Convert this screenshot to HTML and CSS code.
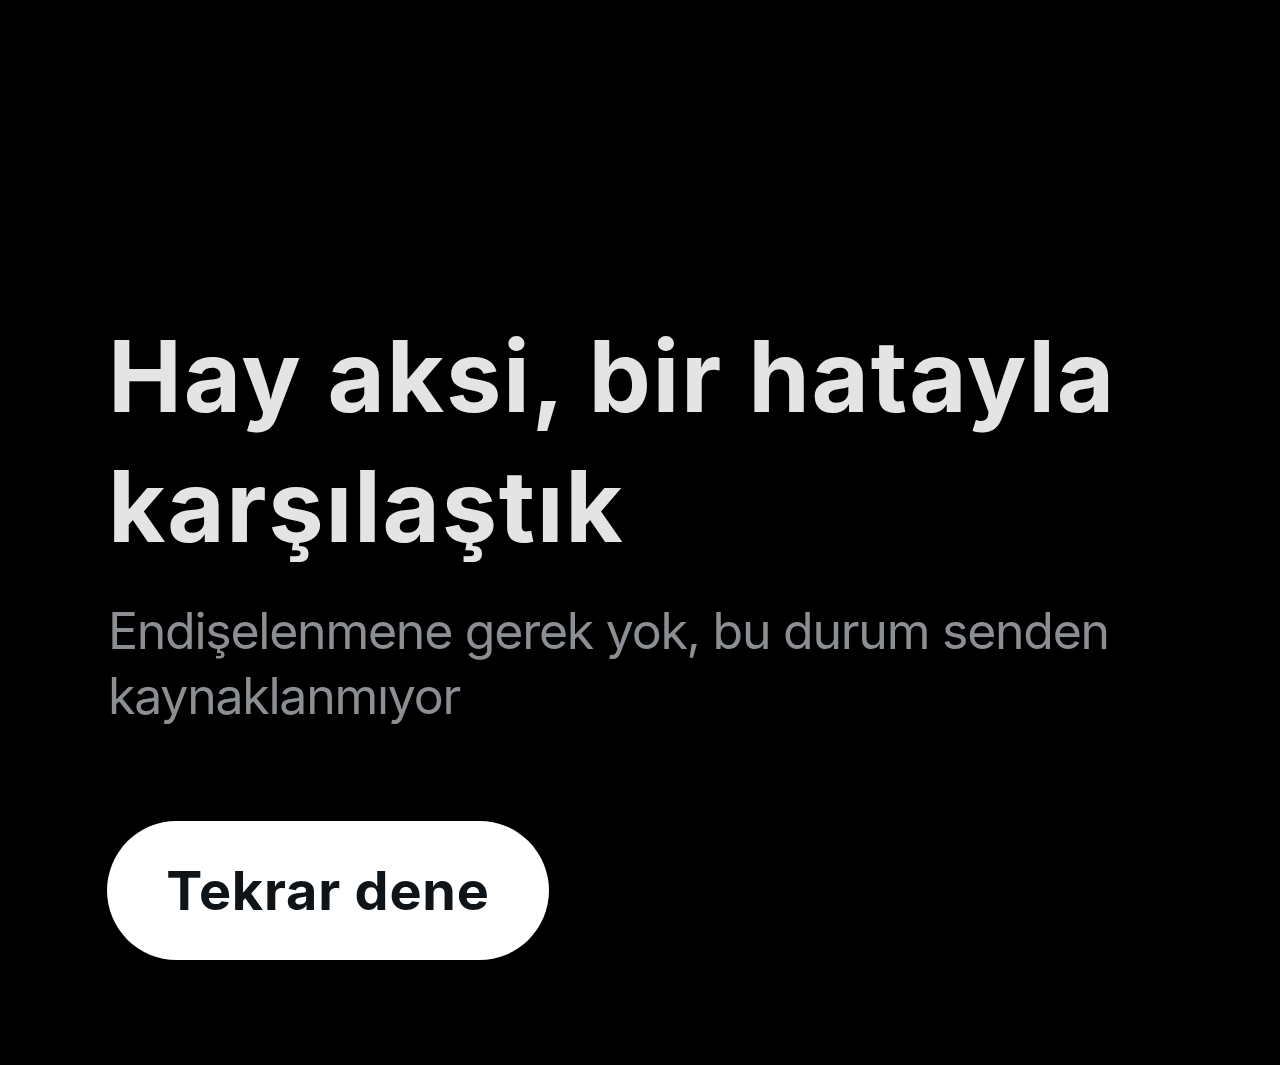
FILE: index.html
```html
<!DOCTYPE html>
<html lang="tr">
<head>
<meta charset="utf-8">
<title>Hata</title>
<link rel="stylesheet" href="styles.css">
</head>
<body>
<main class="error">
  <h1 class="error-title">Hay aksi, bir hatayla karşılaştık</h1>
  <p class="error-text">Endişelenmene gerek yok, bu durum senden kaynaklanmıyor</p>
  <button class="retry" type="button">Tekrar dene</button>
</main>
</body>
</html>
```

FILE: styles.css
```css
html, body {
  margin: 0;
  height: 100%;
  background: #000;
}

body {
  font-family: Inter, "Noto Sans", sans-serif;
}

.error {
  display: flex;
  flex-direction: column;
  align-items: flex-start;
  padding: 311px 0 0 108px;
  width: 1030px;
}

.error-title {
  margin: 0;
  color: #e4e4e4;
  font-size: 99px;
  line-height: 130px;
  font-weight: 700;
  letter-spacing: 1.7px;
}

.error-text {
  margin: 28px 0 0;
  color: #8b8e92;
  font-size: 50px;
  line-height: 65px;
  font-weight: 400;
  letter-spacing: -1.25px;
}

.retry {
  margin-top: 92px;
  margin-left: -1px;
  width: 442px;
  height: 139px;
  border: none;
  border-radius: 70px;
  background: #fff;
  color: #0f1419;
  font-family: inherit;
  font-size: 54px;
  font-weight: 700;
  letter-spacing: 0.8px;
  display: flex;
  align-items: center;
  justify-content: center;
  padding: 0;
}
```
